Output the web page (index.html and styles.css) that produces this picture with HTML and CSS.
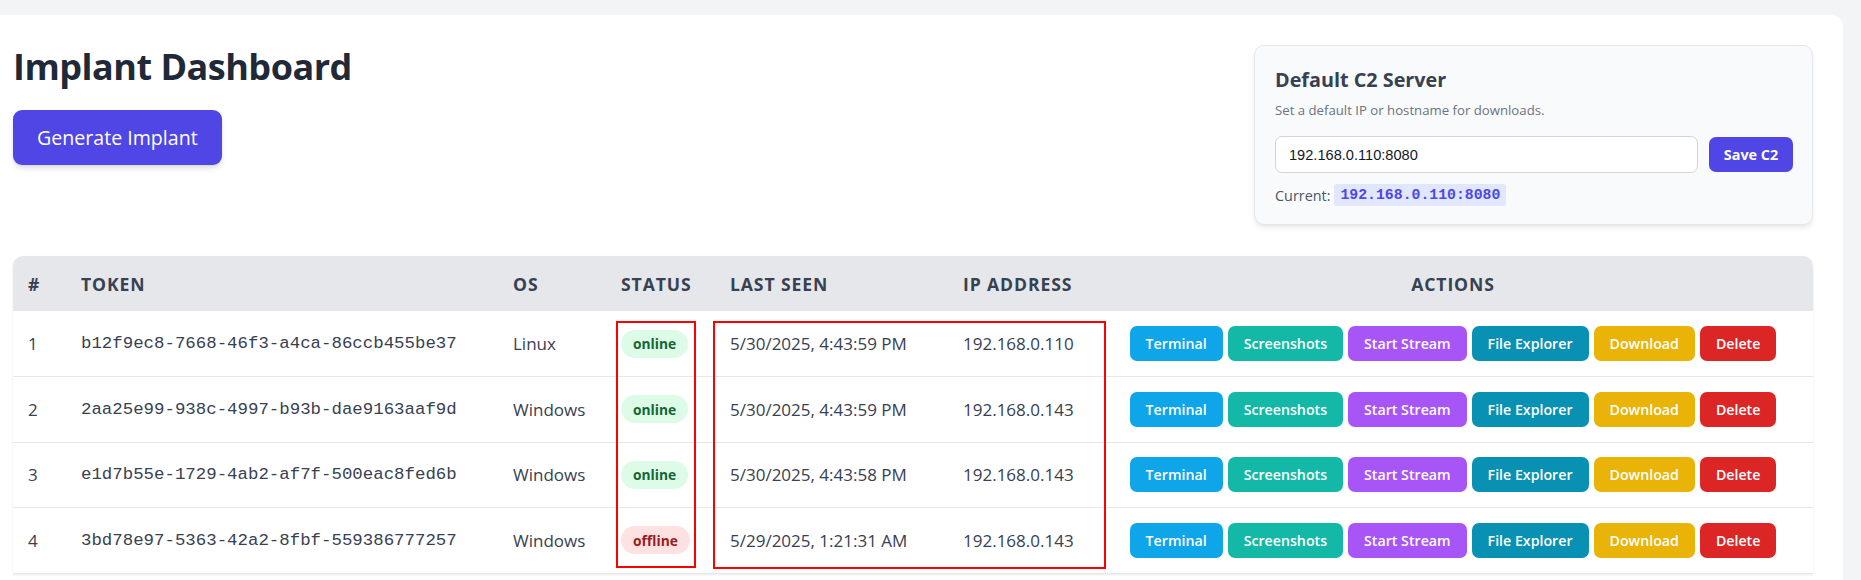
FILE: index.html
```html
<!DOCTYPE html>
<html lang="en">
<head>
<meta charset="utf-8">
<title>Implant Dashboard</title>
<link rel="stylesheet" href="styles.css">
</head>
<body>
<main class="panel">
  <div class="top">
    <div class="intro">
      <h1 class="title">Implant Dashboard</h1>
      <button class="btn-primary">Generate Implant</button>
    </div>
    <section class="c2-card">
      <h2 class="c2-title">Default C2 Server</h2>
      <p class="c2-sub">Set a default IP or hostname for downloads.</p>
      <div class="c2-form">
        <input class="c2-input" type="text" value="192.168.0.110:8080">
        <button class="btn-save">Save C2</button>
      </div>
      <div class="c2-current"><span>Current:</span><code class="c2-code">192.168.0.110:8080</code></div>
    </section>
  </div>

  <div class="table-wrap">
    <table class="implants">
      <colgroup>
        <col class="c-num"><col class="c-token"><col class="c-os"><col class="c-status"><col class="c-seen"><col class="c-ip"><col class="c-actions">
      </colgroup>
      <thead>
        <tr><th>#</th><th>Token</th><th>OS</th><th>Status</th><th>Last Seen</th><th>IP Address</th><th class="th-actions">Actions</th></tr>
      </thead>
      <tbody>
        <tr>
          <td>1</td><td class="token">b12f9ec8-7668-46f3-a4ca-86ccb455be37</td><td>Linux</td>
          <td><span class="pill pill-on">online</span></td><td>5/30/2025, 4:43:59 PM</td><td>192.168.0.110</td>
          <td><div class="actions"><button class="act a-term">Terminal</button><button class="act a-shot">Screenshots</button><button class="act a-stream">Start Stream</button><button class="act a-files">File Explorer</button><button class="act a-dl">Download</button><button class="act a-del">Delete</button></div></td>
        </tr>
        <tr>
          <td>2</td><td class="token">2aa25e99-938c-4997-b93b-dae9163aaf9d</td><td>Windows</td>
          <td><span class="pill pill-on">online</span></td><td>5/30/2025, 4:43:59 PM</td><td>192.168.0.143</td>
          <td><div class="actions"><button class="act a-term">Terminal</button><button class="act a-shot">Screenshots</button><button class="act a-stream">Start Stream</button><button class="act a-files">File Explorer</button><button class="act a-dl">Download</button><button class="act a-del">Delete</button></div></td>
        </tr>
        <tr>
          <td>3</td><td class="token">e1d7b55e-1729-4ab2-af7f-500eac8fed6b</td><td>Windows</td>
          <td><span class="pill pill-on">online</span></td><td>5/30/2025, 4:43:58 PM</td><td>192.168.0.143</td>
          <td><div class="actions"><button class="act a-term">Terminal</button><button class="act a-shot">Screenshots</button><button class="act a-stream">Start Stream</button><button class="act a-files">File Explorer</button><button class="act a-dl">Download</button><button class="act a-del">Delete</button></div></td>
        </tr>
        <tr>
          <td>4</td><td class="token">3bd78e97-5363-42a2-8fbf-559386777257</td><td>Windows</td>
          <td><span class="pill pill-off">offline</span></td><td>5/29/2025, 1:21:31 AM</td><td>192.168.0.143</td>
          <td><div class="actions"><button class="act a-term">Terminal</button><button class="act a-shot">Screenshots</button><button class="act a-stream">Start Stream</button><button class="act a-files">File Explorer</button><button class="act a-dl">Download</button><button class="act a-del">Delete</button></div></td>
        </tr>
      </tbody>
    </table>
    <div class="mark mark-status"></div>
    <div class="mark mark-seen"></div>
  </div>
</main>
</body>
</html>
```

FILE: styles.css
```css
* { box-sizing: border-box; }

html, body { margin: 0; padding: 0; }

body {
  background: #f3f4f6;
  padding-top: 15px;
  font-family: "Open Sans", "Noto Sans", sans-serif;
  color: #374151;
  height: 580px;
  overflow: hidden;
}

.panel {
  width: 1843px;
  min-height: 565px;
  background: #ffffff;
  border-radius: 0 12px 0 0;
  padding: 30px 30px 0 13px;
}

.top {
  display: flex;
  justify-content: space-between;
  align-items: flex-start;
}

.intro {
  display: flex;
  flex-direction: column;
  align-items: flex-start;
}

.title {
  margin: 0;
  font-size: 36px;
  line-height: 44px;
  font-weight: 700;
  letter-spacing: -0.5px;
  color: #1f2937;
}

.btn-primary {
  margin-top: 21px;
  height: 55px;
  padding: 0 24px;
  border: none;
  border-radius: 9px;
  background: #4f46e5;
  color: #ffffff;
  font-family: "Open Sans", sans-serif;
  font-size: 19.6px;
  box-shadow: 0 4px 6px -1px rgba(0,0,0,0.12), 0 2px 4px -2px rgba(0,0,0,0.1);
}

.c2-card {
  width: 559px;
  background: #f9fafb;
  border: 1px solid #e5e7eb;
  border-radius: 10px;
  padding: 21px 19px 18px 20px;
  box-shadow: 0 4px 6px -1px rgba(0,0,0,0.08), 0 2px 4px -2px rgba(0,0,0,0.06);
}

.c2-title {
  margin: 0;
  font-size: 19.8px;
  line-height: 26px;
  font-weight: 700;
  color: #374151;
}

.c2-sub {
  margin: 6px 0 0;
  font-size: 13.2px;
  line-height: 22px;
  color: #6b7280;
}

.c2-form {
  margin-top: 15px;
  display: flex;
  align-items: center;
}

.c2-input {
  flex: 1;
  height: 37px;
  border: 1px solid #d1d5db;
  border-radius: 7px;
  background: #ffffff;
  padding: 0 13px;
  font-family: "Liberation Sans", Arial, sans-serif;
  font-size: 14.6px;
  color: #111827;
}

.btn-save {
  margin-left: 11px;
  width: 84px;
  height: 35px;
  border: none;
  border-radius: 7px;
  background: #4f46e5;
  color: #ffffff;
  font-family: "Open Sans", sans-serif;
  font-size: 14.4px;
  font-weight: 700;
}

.c2-current {
  margin-top: 11px;
  height: 22px;
  display: flex;
  align-items: center;
  gap: 4px;
  font-size: 14.4px;
  color: #4b5563;
}

.c2-code {
  height: 22px;
  line-height: 22px;
  padding: 0 6px;
  background: #e0e7ff;
  color: #4f46e5;
  border-radius: 3px;
  font-family: "Liberation Mono", monospace;
  font-weight: 700;
  font-size: 14.8px;
}

.table-wrap {
  position: relative;
  margin-top: 31px;
  width: 1800px;
  border-radius: 10px 10px 0 0;
  overflow: hidden;
  box-shadow: 0 1px 3px rgba(0,0,0,0.08);
}

.implants {
  width: 100%;
  border-collapse: collapse;
  table-layout: fixed;
}

.c-num { width: 53px; }
.c-token { width: 432px; }
.c-os { width: 108px; }
.c-status { width: 109px; }
.c-seen { width: 233px; }
.c-ip { width: 145px; }
.c-actions { width: 720px; }

.implants th {
  height: 55px;
  padding: 0 15px;
  background: #e5e7eb;
  text-align: left;
  font-size: 17.6px;
  font-weight: 700;
  letter-spacing: 0.05em;
  text-transform: uppercase;
  color: #374151;
}

.implants th.th-actions { text-align: center; }

.implants td {
  height: 65.5px;
  padding: 0 15px;
  border-bottom: 1px solid #e5e7eb;
  font-size: 17px;
  color: #374151;
  white-space: nowrap;
}

.implants td.token {
  font-family: "Liberation Mono", monospace;
  font-size: 17.4px;
  color: #374151;
}

.pill {
  display: inline-flex;
  align-items: center;
  height: 28px;
  padding: 0 12px;
  border-radius: 999px;
  font-size: 13.8px;
  font-weight: 700;
}

.pill-on { background: #dcfce7; color: #166534; }
.pill-off { background: #fee2e2; color: #991b1b; }

.actions {
  display: flex;
  justify-content: center;
  gap: 5px;
}

.act {
  height: 35px;
  padding: 0 16px;
  border: none;
  border-radius: 7px;
  color: #ffffff;
  font-family: "Open Sans", sans-serif;
  font-size: 14.2px;
  font-weight: 600;
}

.a-term { background: #0ea5e9; }
.a-shot { background: #14b8a6; }
.a-stream { background: #a855f7; }
.a-files { background: #0891b2; }
.a-dl { background: #eab308; }
.a-del { background: #dc2626; }

.mark {
  position: absolute;
  border: 2px solid #ff0000;
  pointer-events: none;
}

.mark-status { left: 603px; top: 65px; width: 80px; height: 247px; }
.mark-seen { left: 700px; top: 65px; width: 393px; height: 248px; }
```
